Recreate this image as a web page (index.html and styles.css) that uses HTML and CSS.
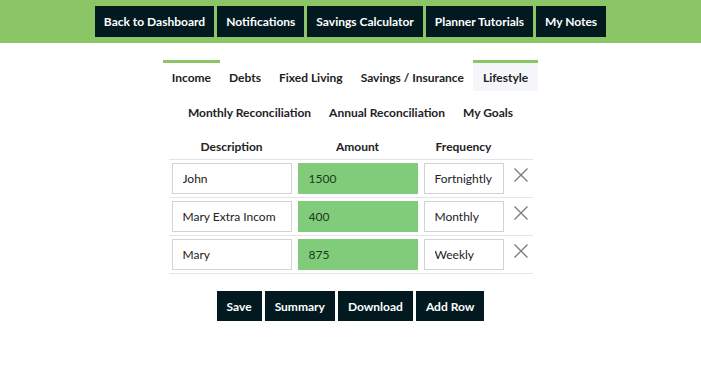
FILE: index.html
```html
<!DOCTYPE html>
<html lang="en">
<head>
    <meta charset="UTF-8">
    <meta name="viewport" content="width=device-width, initial-scale=1.0">
    <title>Income Planner</title>
    <link rel="stylesheet" href="styles.css">
</head>
<body>
    <header class="top-bar">
        <a class="dark-button" href="#">Back to Dashboard</a>
        <a class="dark-button" href="#">Notifications</a>
        <a class="dark-button" href="#">Savings Calculator</a>
        <a class="dark-button" href="#">Planner Tutorials</a>
        <a class="dark-button" href="#">My Notes</a>
    </header>

    <nav class="tabs">
        <div class="tab-row">
            <a class="tab active" href="#">Income</a>
            <a class="tab" href="#">Debts</a>
            <a class="tab" href="#">Fixed Living</a>
            <a class="tab" href="#">Savings / Insurance</a>
            <a class="tab hovered" href="#">Lifestyle</a>
        </div>
        <div class="tab-row">
            <a class="tab" href="#">Monthly Reconciliation</a>
            <a class="tab" href="#">Annual Reconciliation</a>
            <a class="tab" href="#">My Goals</a>
        </div>
    </nav>

    <table class="budget-table">
        <thead>
            <tr>
                <th class="col-desc">Description</th>
                <th class="col-amount">Amount</th>
                <th class="col-freq">Frequency</th>
                <th class="col-remove"></th>
            </tr>
        </thead>
        <tbody>
            <tr>
                <td><input class="field" type="text" value="John"></td>
                <td><input class="field amount" type="text" value="1500"></td>
                <td><input class="field freq" type="text" value="Fortnightly"></td>
                <td><button class="remove" title="Remove"><svg width="14" height="14" viewBox="0 0 14 14"><path d="M0.5 0.5L13.5 13.5M13.5 0.5L0.5 13.5" stroke="#7d7d7d" stroke-width="1.4" fill="none"/></svg></button></td>
            </tr>
            <tr>
                <td><input class="field" type="text" value="Mary Extra Incom"></td>
                <td><input class="field amount" type="text" value="400"></td>
                <td><input class="field freq" type="text" value="Monthly"></td>
                <td><button class="remove" title="Remove"><svg width="14" height="14" viewBox="0 0 14 14"><path d="M0.5 0.5L13.5 13.5M13.5 0.5L0.5 13.5" stroke="#7d7d7d" stroke-width="1.4" fill="none"/></svg></button></td>
            </tr>
            <tr>
                <td><input class="field" type="text" value="Mary"></td>
                <td><input class="field amount" type="text" value="875"></td>
                <td><input class="field freq" type="text" value="Weekly"></td>
                <td><button class="remove" title="Remove"><svg width="14" height="14" viewBox="0 0 14 14"><path d="M0.5 0.5L13.5 13.5M13.5 0.5L0.5 13.5" stroke="#7d7d7d" stroke-width="1.4" fill="none"/></svg></button></td>
            </tr>
        </tbody>
    </table>

    <div class="actions">
        <button class="dark-button">Save</button>
        <button class="dark-button">Summary</button>
        <button class="dark-button">Download</button>
        <button class="dark-button">Add Row</button>
    </div>
</body>
</html>
```

FILE: styles.css
```css
body {
    margin: 0;
    font-family: Lato, 'Noto Sans', sans-serif;
    font-size: 12px;
    color: #222;
    background: #fff;
}

.top-bar {
    background: #8bc566;
    height: 43px;
    padding-top: 6px;
    box-sizing: border-box;
    display: flex;
    justify-content: center;
    align-items: flex-start;
    gap: 3px;
}

.dark-button {
    display: inline-flex;
    align-items: center;
    height: 31px;
    padding: 0 9px;
    background: #021a1f;
    color: #fff;
    font-family: inherit;
    font-size: 12px;
    font-weight: 700;
    text-decoration: none;
    border: none;
    border-radius: 0;
    cursor: pointer;
}

.tabs {
    margin-top: 17px;
    display: flex;
    flex-direction: column;
    align-items: center;
    gap: 4px;
}

.tab-row {
    display: flex;
    justify-content: center;
}

.tab {
    padding: 7px 9px 6px;
    border-top: 3px solid transparent;
    color: #222;
    font-weight: 700;
    text-decoration: none;
    line-height: 15px;
}

.tab.active {
    border-top-color: #8bc566;
}

.tab.hovered {
    padding-left: 10px;
    padding-right: 10px;
    border-top-color: #8bc566;
    background: #f4f6f9;
}

.budget-table {
    margin: 8px auto 0;
    border-collapse: collapse;
}

.budget-table th {
    font-weight: 700;
    padding: 5px 3px 5px;
    line-height: 15px;
    text-align: center;
}

.budget-table td {
    border-top: 1px solid #e2e5e8;
    padding: 3px;
    vertical-align: top;
}

.budget-table tbody tr:last-child td {
    border-bottom: 1px solid #e2e5e8;
}

.col-desc, .col-amount {
    width: 120px;
}

.col-freq {
    width: 80px;
}

.col-remove {
    width: 20px;
}

.field {
    display: block;
    box-sizing: border-box;
    width: 120px;
    height: 31px;
    padding: 0 10px;
    border: 1px solid #d3d3d3;
    background: #fff;
    color: #222;
    font-family: inherit;
    font-size: 12px;
}

.field.freq {
    width: 80px;
}

.field.amount {
    background: #80cc7a;
    border-color: #80cc7a;
    color: #1d3a1d;
}

.remove {
    display: block;
    background: none;
    border: none;
    padding: 5px 0 0 4px;
    cursor: pointer;
}

.actions {
    margin-top: 17px;
    display: flex;
    justify-content: center;
    gap: 3px;
}

.actions .dark-button {
    height: 30px;
    padding: 0 10px;
}
```
